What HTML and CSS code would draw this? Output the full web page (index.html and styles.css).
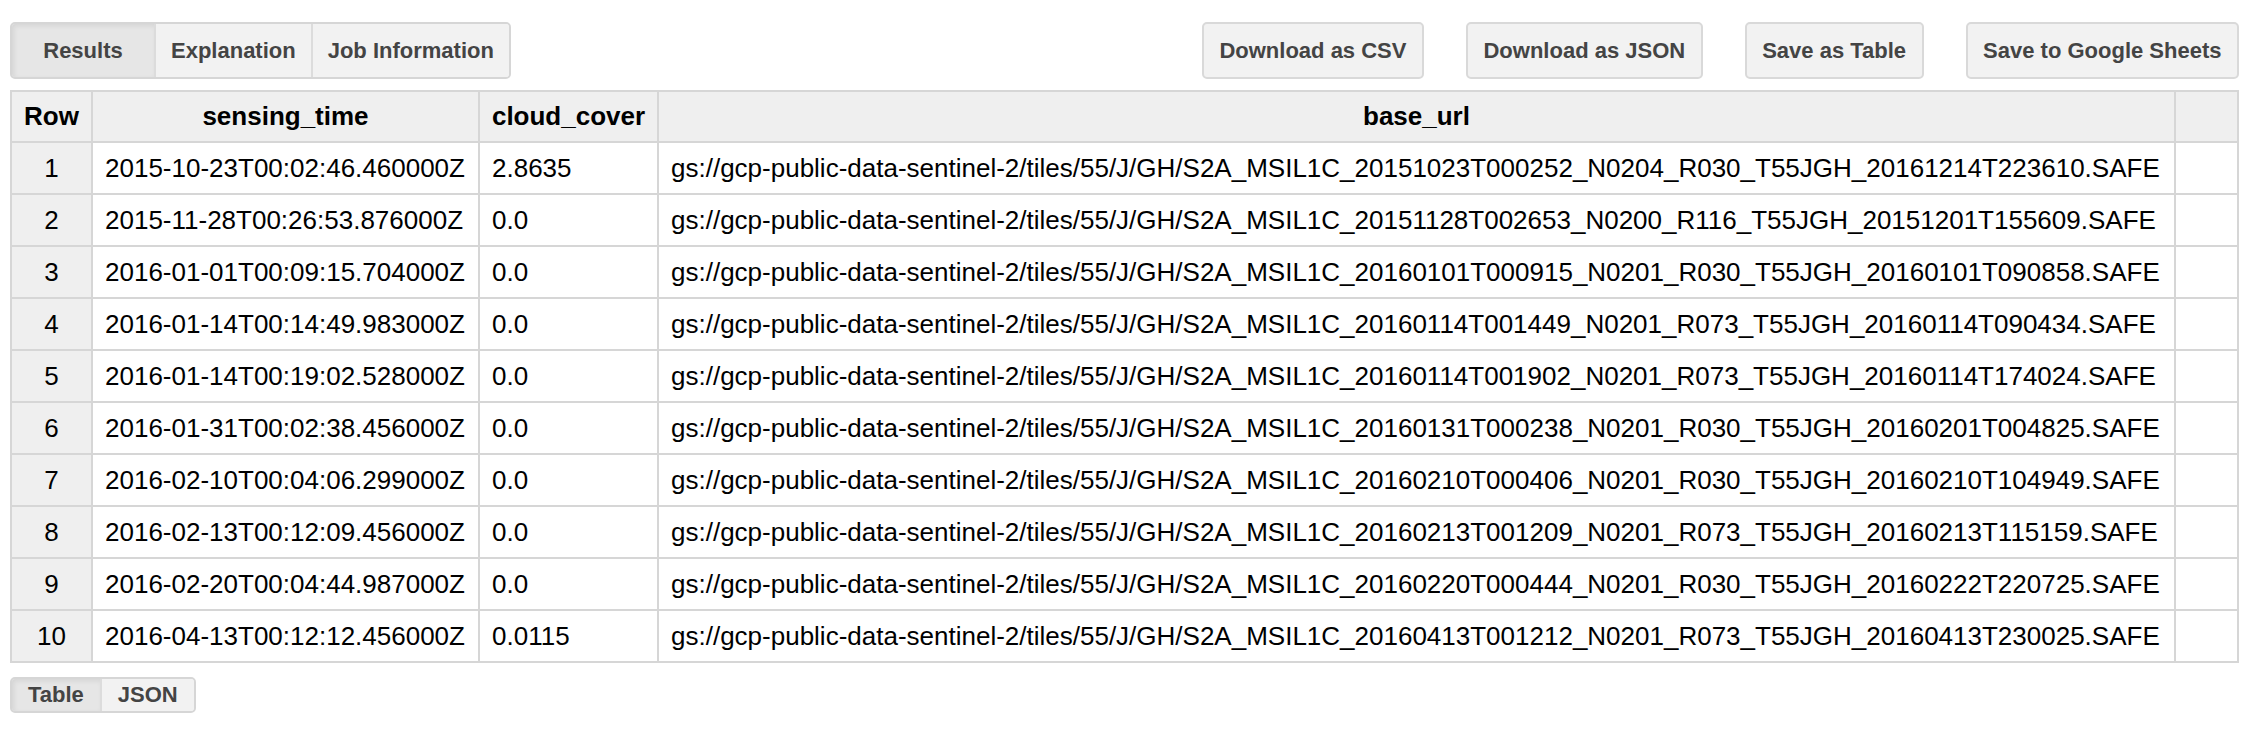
FILE: index.html
```html
<!DOCTYPE html>
<html>
<head>
<meta charset="utf-8">
<link rel="stylesheet" href="styles.css">
</head>
<body>
<div class="page">
  <div class="toolbar">
    <div class="group group-top">
      <button class="tab tab-wide selected">Results</button>
      <button class="tab">Explanation</button>
      <button class="tab">Job Information</button>
    </div>
    <div class="actions">
      <button class="btn">Download as CSV</button>
      <button class="btn">Download as JSON</button>
      <button class="btn">Save as Table</button>
      <button class="btn">Save to Google Sheets</button>
    </div>
  </div>

  <div class="grid">
    <div class="cell head">Row</div>
    <div class="cell head">sensing_time</div>
    <div class="cell head">cloud_cover</div>
    <div class="cell head">base_url</div>
    <div class="cell head"></div>

    <div class="cell num">1</div><div class="cell">2015-10-23T00:02:46.460000Z</div><div class="cell">2.8635</div><div class="cell">gs://gcp-public-data-sentinel-2/tiles/55/J/GH/S2A_MSIL1C_20151023T000252_N0204_R030_T55JGH_20161214T223610.SAFE</div><div class="cell"></div>
    <div class="cell num">2</div><div class="cell">2015-11-28T00:26:53.876000Z</div><div class="cell">0.0</div><div class="cell">gs://gcp-public-data-sentinel-2/tiles/55/J/GH/S2A_MSIL1C_20151128T002653_N0200_R116_T55JGH_20151201T155609.SAFE</div><div class="cell"></div>
    <div class="cell num">3</div><div class="cell">2016-01-01T00:09:15.704000Z</div><div class="cell">0.0</div><div class="cell">gs://gcp-public-data-sentinel-2/tiles/55/J/GH/S2A_MSIL1C_20160101T000915_N0201_R030_T55JGH_20160101T090858.SAFE</div><div class="cell"></div>
    <div class="cell num">4</div><div class="cell">2016-01-14T00:14:49.983000Z</div><div class="cell">0.0</div><div class="cell">gs://gcp-public-data-sentinel-2/tiles/55/J/GH/S2A_MSIL1C_20160114T001449_N0201_R073_T55JGH_20160114T090434.SAFE</div><div class="cell"></div>
    <div class="cell num">5</div><div class="cell">2016-01-14T00:19:02.528000Z</div><div class="cell">0.0</div><div class="cell">gs://gcp-public-data-sentinel-2/tiles/55/J/GH/S2A_MSIL1C_20160114T001902_N0201_R073_T55JGH_20160114T174024.SAFE</div><div class="cell"></div>
    <div class="cell num">6</div><div class="cell">2016-01-31T00:02:38.456000Z</div><div class="cell">0.0</div><div class="cell">gs://gcp-public-data-sentinel-2/tiles/55/J/GH/S2A_MSIL1C_20160131T000238_N0201_R030_T55JGH_20160201T004825.SAFE</div><div class="cell"></div>
    <div class="cell num">7</div><div class="cell">2016-02-10T00:04:06.299000Z</div><div class="cell">0.0</div><div class="cell">gs://gcp-public-data-sentinel-2/tiles/55/J/GH/S2A_MSIL1C_20160210T000406_N0201_R030_T55JGH_20160210T104949.SAFE</div><div class="cell"></div>
    <div class="cell num">8</div><div class="cell">2016-02-13T00:12:09.456000Z</div><div class="cell">0.0</div><div class="cell">gs://gcp-public-data-sentinel-2/tiles/55/J/GH/S2A_MSIL1C_20160213T001209_N0201_R073_T55JGH_20160213T115159.SAFE</div><div class="cell"></div>
    <div class="cell num">9</div><div class="cell">2016-02-20T00:04:44.987000Z</div><div class="cell">0.0</div><div class="cell">gs://gcp-public-data-sentinel-2/tiles/55/J/GH/S2A_MSIL1C_20160220T000444_N0201_R030_T55JGH_20160222T220725.SAFE</div><div class="cell"></div>
    <div class="cell num">10</div><div class="cell">2016-04-13T00:12:12.456000Z</div><div class="cell">0.0115</div><div class="cell">gs://gcp-public-data-sentinel-2/tiles/55/J/GH/S2A_MSIL1C_20160413T001212_N0201_R073_T55JGH_20160413T230025.SAFE</div><div class="cell"></div>
  </div>

  <div class="group group-bottom">
    <button class="tab selected">Table</button>
    <button class="tab">JSON</button>
  </div>
</div>
</body>
</html>
```

FILE: styles.css
```css
* { box-sizing: border-box; }

html, body {
  margin: 0;
  padding: 0;
  background: #ffffff;
}

body {
  font-family: "Liberation Sans", Arial, Helvetica, sans-serif;
  color: #000;
}

.page {
  padding: 22px 0 0 10px;
  width: 2239px;
}

.toolbar {
  display: flex;
  justify-content: space-between;
  align-items: flex-start;
  height: 57px;
}

.group {
  display: flex;
  border: 2px solid #d6d6d6;
  border-radius: 5px;
  overflow: hidden;
  background: #f2f2f2;
}

.group-top { height: 57px; }

.tab {
  font-family: inherit;
  font-size: 22px;
  font-weight: bold;
  color: #444;
  background: #f2f2f2;
  border: 0;
  border-left: 2px solid #dcdcdc;
  padding: 0 15px;
  margin: 0;
  height: 100%;
  cursor: pointer;
}

.tab:first-child { border-left: 0; }

.tab-wide { min-width: 142px; }

.tab.selected {
  background: #e6e6e6;
  box-shadow: inset 2px 2px 5px rgba(0, 0, 0, 0.08);
}

.actions {
  display: flex;
  gap: 42px;
}

.btn {
  font-family: inherit;
  font-size: 22px;
  font-weight: bold;
  color: #444;
  background: #f2f2f2;
  border: 2px solid #d9d9d9;
  border-radius: 5px;
  padding: 0 15.5px;
  height: 57px;
  margin: 0;
  cursor: pointer;
}

.grid {
  display: grid;
  grid-template-columns: 81px 387px 179px 1517px 1fr;
  grid-template-rows: 51px repeat(10, 52px);
  margin-top: 11px;
  width: 2229px;
  border-left: 2px solid #d6d6d6;
  border-top: 2px solid #d6d6d6;
}

.cell {
  display: flex;
  align-items: center;
  padding: 0 12px;
  border-right: 2px solid #d6d6d6;
  border-bottom: 2px solid #d6d6d6;
  font-size: 26px;
  white-space: nowrap;
  overflow: hidden;
  background: #fff;
}

.cell.head {
  justify-content: center;
  font-weight: bold;
  background: #efefef;
}

.cell.num {
  justify-content: center;
  background: #efefef;
}

.group-bottom {
  display: inline-flex;
  margin-top: 14px;
  height: 36px;
}

.group-bottom .tab {
  padding: 0 16px;
}
```
